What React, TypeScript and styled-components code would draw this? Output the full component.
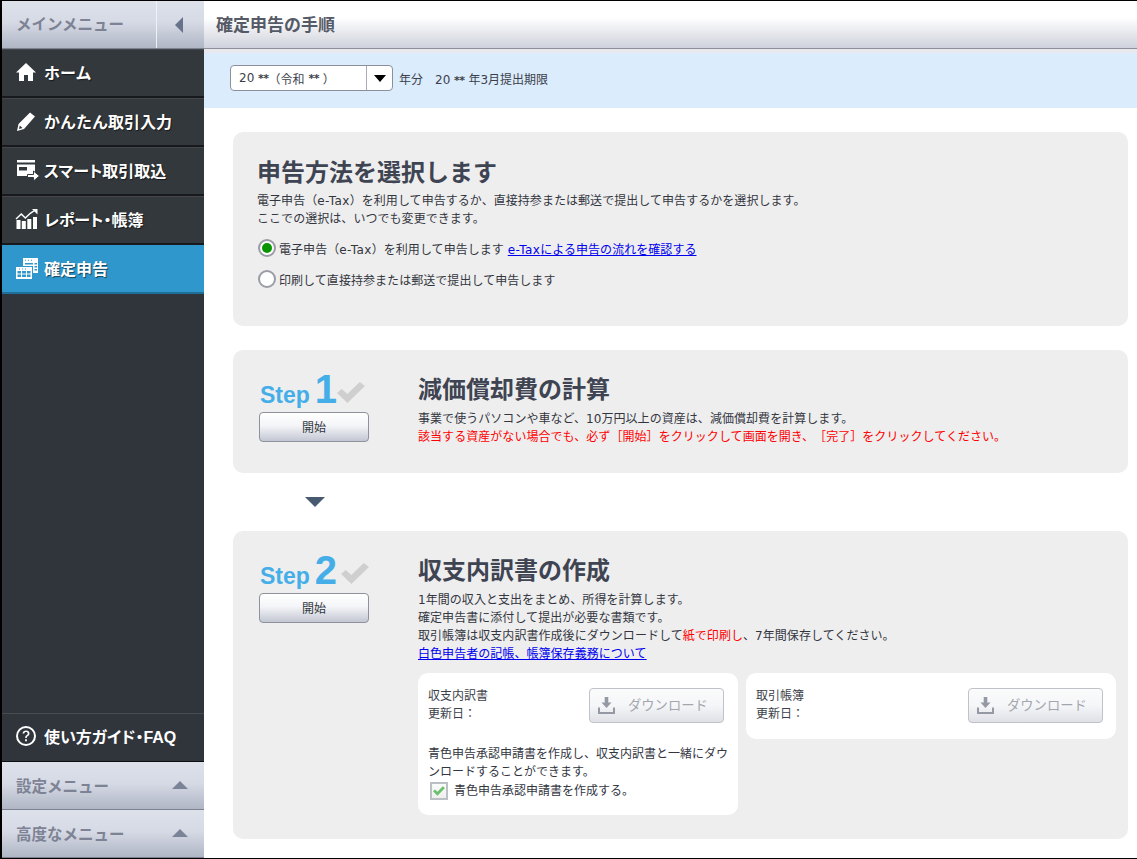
import React from 'react'
import styled, { createGlobalStyle } from 'styled-components'

const GlobalStyle = createGlobalStyle`
  html, body {
    margin: 0;
    padding: 0;
    background: #fff;
  }
  * {
    box-sizing: border-box;
  }
  body {
    font-family: "DejaVu Sans", "Noto Sans CJK JP", sans-serif;
    font-size: 12px;
    color: #3c3f4a;
    text-spacing-trim: space-all;
  }
`

const Frame = styled.div`
  width: 1137px;
  height: 859px;
  display: flex;
  overflow: hidden;
  border-top: 1px solid #000;
  border-bottom: 1px solid #000;
  border-left: 2px solid #000;
  background: #fff;
`

const Sidebar = styled.aside`
  width: 202px;
  flex: none;
  display: flex;
  flex-direction: column;
  background: #30353b;
  font-family: "Liberation Sans", "Noto Sans CJK JP", sans-serif;
`

const menuGradient = `linear-gradient(#dde1ea 0%, #d6dae5 45%, #b0b6c5 100%)`

const SideHeader = styled.div`
  height: 48px;
  flex: none;
  display: flex;
  background: ${menuGradient};
  border-bottom: 1px solid #7d8290;
`

const SideTitle = styled.div`
  flex: 1;
  display: flex;
  align-items: center;
  padding: 0 0 3px 14px;
  font-size: 15.5px;
  font-weight: 700;
  color: #7d8394;
`

const CollapseCell = styled.div`
  width: 48px;
  flex: none;
  display: flex;
  align-items: center;
  justify-content: center;
  border-left: 1px solid #f0f1f5;
  padding-right: 4px;
`

const LeftTriangle = styled.div`
  width: 0;
  height: 0;
  border-top: 8px solid transparent;
  border-bottom: 8px solid transparent;
  border-right: 8px solid #68738a;
`

const NavList = styled.nav`
  display: flex;
  flex-direction: column;
`

const NavRow = styled.a<{ $active?: boolean; $proportional?: boolean }>`
  height: 49px;
  display: flex;
  align-items: center;
  gap: 8px;
  padding: 0 0 2px 14px;
  font-size: 16px;
  font-weight: 700;
  font-feature-settings: ${(p) => (p.$proportional ? '"palt"' : 'normal')};
  color: #fff;
  text-shadow: 1px 1px 1px rgba(0, 0, 0, 0.55);
  background: ${(p) => (p.$active ? '#3097cd' : '#33383d')};
  border-top: 1px solid ${(p) => (p.$active ? '#3097cd' : '#43474c')};
  border-bottom: 2px solid ${(p) => (p.$active ? '#1f6f9c' : '#17191c')};
`

const NavIcon = styled.svg`
  width: 20px;
  height: 20px;
  flex: none;
  fill: #fff;
  overflow: visible;
`

const Spacer = styled.div`
  flex: 1;
`

const GuideRow = styled.div`
  height: 49px;
  flex: none;
  display: flex;
  align-items: center;
  gap: 8px;
  padding: 0 0 3px 14px;
  font-size: 16px;
  font-weight: 700;
  font-feature-settings: "palt";
  color: #fff;
  border-top: 1px solid #474c50;
  border-bottom: 1px solid #0d0e10;
`

const FooterMenu = styled.div`
  height: 48px;
  flex: none;
  display: flex;
  align-items: center;
  justify-content: space-between;
  padding: 0 16px 2px 14px;
  font-size: 15.5px;
  font-weight: 700;
  color: #7d8394;
  background: ${menuGradient};
  border-bottom: 1px solid #7d8290;
`

const UpTriangle = styled.div`
  width: 0;
  height: 0;
  border-left: 8px solid transparent;
  border-right: 8px solid transparent;
  border-bottom: 8px solid #7a8398;
`

const Main = styled.main`
  flex: 1;
  min-width: 0;
  display: flex;
  flex-direction: column;
`

const TopBar = styled.header`
  height: 48px;
  flex: none;
  display: flex;
  align-items: center;
  padding: 0 0 2px 12px;
  font-size: 17px;
  font-weight: 700;
  color: #555a66;
  background: linear-gradient(#fff 0%, #fff 35%, #cfd2dc 100%);
  border-bottom: 1px solid #8c8f99;
`

const YearBar = styled.div`
  height: 59px;
  flex: none;
  display: flex;
  align-items: center;
  padding: 0 0 5px 26px;
  background: #dbecfd;
  border-top: 4px solid #e8e9ee;
  font-size: 12px;
  color: #3c3f4a;
`

const YearSelect = styled.div`
  width: 163px;
  height: 26px;
  display: flex;
  background: #fff;
  border: 1px solid #8c8f99;
  border-radius: 4px;
  margin-right: 6px;
`

const YearValue = styled.div`
  flex: 1;
  display: flex;
  align-items: center;
  padding-left: 8px;
  white-space: pre;
`

const SelectArrow = styled.div`
  width: 26px;
  display: flex;
  align-items: center;
  justify-content: center;
  border-left: 1px solid #a9acb5;

  &::after {
    content: '';
    border-left: 6px solid transparent;
    border-right: 6px solid transparent;
    border-top: 7px solid #000;
  }
`

const Deadline = styled.span`
  margin-left: 12px;
  white-space: pre;
`

const Mask = styled.span`
  font-size: 11px;
  font-weight: 700;
  letter-spacing: -0.5px;
`

const Content = styled.div`
  flex: 1;
  display: flex;
  flex-direction: column;
  padding: 24px 9px 0 29px;
`

const Card = styled.section`
  background: #eee;
  border-radius: 10px;
`

const MethodCard = styled(Card)`
  height: 194px;
  padding: 26px 24px 0 25px;
  margin-bottom: 24px;
`

const Heading = styled.h2`
  margin: 0 0 4px -1px;
  font-size: 24px;
  line-height: 30px;
  font-weight: 700;
  color: #3f4452;
`

const Copy = styled.p`
  margin: 0;
  font-size: 12px;
  line-height: 18px;
  letter-spacing: 0.05px;
  color: #33363f;
`

const MethodCopy = styled(Copy)`
  margin-left: -1px;
`

const Latin = styled.span`
  letter-spacing: 0.4px;
`

const Alert = styled.span`
  color: #f00;
`

const TextLink = styled.a`
  color: #0000ee;
  text-decoration: underline;
`

const RadioRow = styled.label<{ $first?: boolean }>`
  display: flex;
  align-items: center;
  gap: 3px;
  height: 20px;
  margin-top: ${(p) => (p.$first ? '10px' : '11px')};
  font-size: 12px;
  letter-spacing: 0.05px;
  color: #33363f;
`

const Radio = styled.span<{ $on?: boolean }>`
  width: 18px;
  height: 18px;
  flex: none;
  display: flex;
  align-items: center;
  justify-content: center;
  border-radius: 50%;
  border: 2px solid #9a9ca6;
  background: #fff;

  &::after {
    content: '';
    display: ${(p) => (p.$on ? 'block' : 'none')};
    width: 10px;
    height: 10px;
    border-radius: 50%;
    background: #0a9400;
  }
`

const StepCard = styled.section<{ $height: number }>`
  display: flex;
  height: ${(p) => p.$height}px;
  background: #eee;
  border-radius: 10px;
`

const StepAside = styled.div`
  width: 185px;
  flex: none;
  padding: 16px 0 0 26px;
`

const StepLabel = styled.div`
  height: 44px;
  margin-bottom: 2px;
  display: flex;
  align-items: flex-end;
  font-family: "Liberation Sans", sans-serif;
  font-weight: 700;
  color: #45aee8;
`

const StepWord = styled.span`
  font-size: 23px;
  line-height: 30px;
  margin-left: 1px;
  margin-right: 5px;
`

const StepNumber = styled.span`
  font-size: 40px;
  line-height: 42px;
`

const StepCheck = styled.svg<{ $gap: number }>`
  width: 28px;
  height: 21px;
  margin: 0 0 7px ${(p) => p.$gap}px;
  fill: #cfcfcf;
`

const Button = styled.button`
  display: block;
  width: 110px;
  height: 30px;
  font-family: inherit;
  font-size: 12px;
  color: #33363f;
  background: linear-gradient(#fff 0%, #f4f5f8 45%, #c3c7d3 100%);
  border: 1px solid #8f929c;
  border-radius: 4px;
  padding: 0 0 2px;
`

const StepBody = styled.div`
  flex: 1;
  min-width: 0;
  padding: 24px 12px 0 0;
`

const StepTitle = styled.h3`
  margin: 0 0 4px;
  font-size: 24px;
  line-height: 32px;
  font-weight: 700;
  color: #3f4452;
`

const Arrow = styled.div`
  width: 20px;
  height: 58px;
  margin-left: 72px;
  display: flex;
  align-items: center;
  justify-content: center;

  &::after {
    content: '';
    border-left: 10px solid transparent;
    border-right: 10px solid transparent;
    border-top: 10px solid #475a70;
  }
`

const Panels = styled.div`
  display: flex;
  align-items: flex-start;
  gap: 8px;
  margin-top: 10px;
`

const Panel = styled.div<{ $width: number; $height: number }>`
  width: ${(p) => p.$width}px;
  height: ${(p) => p.$height}px;
  background: #fff;
  border-radius: 10px;
  padding: 14px 10px 0;
  font-size: 12px;
  line-height: 18px;
`

const PanelTop = styled.div<{ $inset: number }>`
  display: flex;
  justify-content: space-between;
  padding-right: ${(p) => p.$inset}px;
`

const DownloadButton = styled.button`
  width: 135px;
  height: 35px;
  margin-top: 1px;
  display: flex;
  align-items: center;
  gap: 13px;
  font-family: inherit;
  font-size: 13.3px;
  color: #a3a6ae;
  background: linear-gradient(#fbfbfc 0%, #f5f6f8 50%, #dfe1e7 100%);
  border: 1px solid #c0c2c9;
  border-radius: 4px;
  padding: 0 0 2px 8px;
`

const DownloadIcon = styled.svg`
  width: 17px;
  height: 17px;
  margin-top: 2px;
  fill: #9499a3;
`

const PanelNote = styled.p`
  margin: 22px 0 0;
  line-height: 18px;
  color: #33363f;
`

const CheckRow = styled.label`
  display: flex;
  align-items: center;
  gap: 6px;
  margin-top: 1px;
  padding-left: 2px;
  color: #33363f;
`

const CheckBox = styled.span`
  width: 18px;
  height: 18px;
  flex: none;
  display: flex;
  align-items: center;
  justify-content: center;
  background: linear-gradient(#fafbfb, #eef0f0);
  border: 2px solid #bcbfc6;
`

const CheckMark = styled.svg`
  width: 12px;
  height: 10px;
  fill: #6cc06c;
`

const checkPath = 'M0 11 L4.500 7 L10 12 L22 0 L27 4 L10 21 Z'

const Download = () => (
  <DownloadButton disabled>
    <DownloadIcon viewBox="0 0 17 17">
      <path d="M6.700 0h3.600v5.500h3.200L8.500 11 3.500 5.500h3.200z" />
      <path d="M0 10.500h2V15h13v-4.500h2V17H0z" />
    </DownloadIcon>
    ダウンロード
  </DownloadButton>
)

const App = () => (
  <>
    <GlobalStyle />
    <Frame>
      <Sidebar>
        <SideHeader>
          <SideTitle>メインメニュー</SideTitle>
          <CollapseCell>
            <LeftTriangle />
          </CollapseCell>
        </SideHeader>
        <NavList>
          <NavRow>
            <NavIcon viewBox="0 0 20 20">
              <path d="M10 1 L20 10.500 L17 10.500 V19 H12 V13 H8 V19 H3 V10.500 H0 Z" />
            </NavIcon>
            ホーム
          </NavRow>
          <NavRow>
            <NavIcon viewBox="0 0 20 20">
              <path d="M14 1.500 L19 5.500 L8 18 L1 20 L2.500 13 Z M3.800 14.500 L3 18 L6.500 17 Z" fillRule="evenodd" />
            </NavIcon>
            かんたん取引入力
          </NavRow>
          <NavRow $proportional>
            <NavIcon viewBox="0 0 20 20">
              <path d="M1 0h18v2.500H1z" />
              <path d="M1 4.500h18V16H1z M3 7v3.500h8V7z" fillRule="evenodd" />
              <path d="M11.500 14.500h6v-3.500l6 5-6 5v-3.500h-6z" stroke="#33383d" strokeWidth="1" />
            </NavIcon>
            スマート取引取込
          </NavRow>
          <NavRow $proportional>
            <NavIcon viewBox="0 0 20 20">
              <path d="M0.500 11h4v9h-4z M5.800 12h4v8h-4z M11.300 10h4v10h-4z M17 8h4v12h-4z" />
              <polyline points="0,10 5.300,5 9.300,9 14.300,4.300 18.500,1.500" fill="none" stroke="#fff" strokeWidth="1.500" />
              <path d="M16 0h5.500v5.500z" />
            </NavIcon>
            レポート・帳簿
          </NavRow>
          <NavRow $active>
            <NavIcon viewBox="0 0 20 20">
              <path
                d="M7 0h15v15h-5V8H7z M9 1.800v1h1v-1z M12 1.800v1h1v-1z M15 1.800v1h1v-1z M18.500 5v1.500H21V5z M18.500 8v1.500H21V8z M18.500 11v1.500H21V11z M9 5v1.500h8V5z"
                fillRule="evenodd"
              />
              <path
                d="M0 9h16v12H0z M3 10.500v1h1v-1z M6 10.500v1h1v-1z M9 10.500v1h1v-1z M1.500 13v2.500H5V13z M6 13v2.500h4V13z M11 13v2.500h3.500V13z M1.500 16.500V19H5v-2.500z M6 16.500V19h4v-2.500z M11 16.500V19h3.500v-2.500z"
                fillRule="evenodd"
              />
            </NavIcon>
            確定申告
          </NavRow>
        </NavList>
        <Spacer />
        <GuideRow>
          <NavIcon viewBox="0 0 20 20">
            <path
              d="M10 0a10 10 0 1 0 0 20a10 10 0 0 0 0-20z M10 2a8 8 0 1 1 0 16a8 8 0 0 1 0-16z M6.500 7.500C6.700 5.500 8.200 4.500 10 4.500c2 0 3.500 1.200 3.500 3 0 1.500-1 2.200-1.800 2.800-.7.500-.9.900-.9 1.700H9.200c0-1.400.4-2 1.300-2.700.7-.5 1.300-1 1.300-1.800 0-.9-.7-1.500-1.800-1.500-1 0-1.700.6-1.800 1.500z M9.100 13.300h1.800v1.900H9.100z"
              fillRule="evenodd"
            />
          </NavIcon>
          使い方ガイド・FAQ
        </GuideRow>
        <FooterMenu>
          設定メニュー
          <UpTriangle />
        </FooterMenu>
        <FooterMenu>
          高度なメニュー
          <UpTriangle />
        </FooterMenu>
      </Sidebar>
      <Main>
        <TopBar>確定申告の手順</TopBar>
        <YearBar>
          <YearSelect>
            <YearValue>
              20 <Mask>**</Mask>（令和 <Mask>**</Mask> ）
            </YearValue>
            <SelectArrow />
          </YearSelect>
          年分
          <Deadline>
            20 <Mask>**</Mask> 年3月提出期限
          </Deadline>
        </YearBar>
        <Content>
          <MethodCard>
            <Heading>申告方法を選択します</Heading>
            <MethodCopy>
              電子申告（<Latin>e-Tax</Latin>）を利用して申告するか、直接持参または郵送で提出して申告するかを選択します。
              <br />
              ここでの選択は、いつでも変更できます。
            </MethodCopy>
            <RadioRow $first>
              <Radio $on />
              <span>
                電子申告（<Latin>e-Tax</Latin>）を利用して申告します{' '}
                <TextLink href="#">
                  <Latin>e-Tax</Latin>による申告の流れを確認する
                </TextLink>
              </span>
            </RadioRow>
            <RadioRow>
              <Radio />
              印刷して直接持参または郵送で提出して申告します
            </RadioRow>
          </MethodCard>
          <StepCard $height={123}>
            <StepAside>
              <StepLabel>
                <StepWord>Step</StepWord>
                <StepNumber>1</StepNumber>
                <StepCheck $gap={0} viewBox="0 0 27 21" preserveAspectRatio="none">
                  <path d={checkPath} />
                </StepCheck>
              </StepLabel>
              <Button>開始</Button>
            </StepAside>
            <StepBody>
              <StepTitle>減価償却費の計算</StepTitle>
              <Copy>
                事業で使うパソコンや車など、10万円以上の資産は、減価償却費を計算します。
                <br />
                <Alert>該当する資産がない場合でも、必ず［開始］をクリックして画面を開き、［完了］をクリックしてください。</Alert>
              </Copy>
            </StepBody>
          </StepCard>
          <Arrow />
          <StepCard $height={308}>
            <StepAside>
              <StepLabel>
                <StepWord>Step</StepWord>
                <StepNumber>2</StepNumber>
                <StepCheck $gap={4} viewBox="0 0 27 21" preserveAspectRatio="none">
                  <path d={checkPath} />
                </StepCheck>
              </StepLabel>
              <Button>開始</Button>
            </StepAside>
            <StepBody>
              <StepTitle>収支内訳書の作成</StepTitle>
              <Copy>
                1年間の収入と支出をまとめ、所得を計算します。
                <br />
                確定申告書に添付して提出が必要な書類です。
                <br />
                取引帳簿は収支内訳書作成後にダウンロードして<Alert>紙で印刷し</Alert>、7年間保存してください。
                <br />
                <TextLink href="#">白色申告者の記帳、帳簿保存義務について</TextLink>
              </Copy>
              <Panels>
                <Panel $width={320} $height={142}>
                  <PanelTop $inset={4}>
                    <div>
                      収支内訳書
                      <br />
                      更新日：
                    </div>
                    <Download />
                  </PanelTop>
                  <PanelNote>青色申告承認申請書を作成し、収支内訳書と一緒にダウンロードすることができます。</PanelNote>
                  <CheckRow>
                    <CheckBox>
                      <CheckMark viewBox="0 0 27 21">
                        <path d={checkPath} />
                      </CheckMark>
                    </CheckBox>
                    青色申告承認申請書を作成する。
                  </CheckRow>
                </Panel>
                <Panel $width={370} $height={66}>
                  <PanelTop $inset={3}>
                    <div>
                      取引帳簿
                      <br />
                      更新日：
                    </div>
                    <Download />
                  </PanelTop>
                </Panel>
              </Panels>
            </StepBody>
          </StepCard>
        </Content>
      </Main>
    </Frame>
  </>
)

export default App
